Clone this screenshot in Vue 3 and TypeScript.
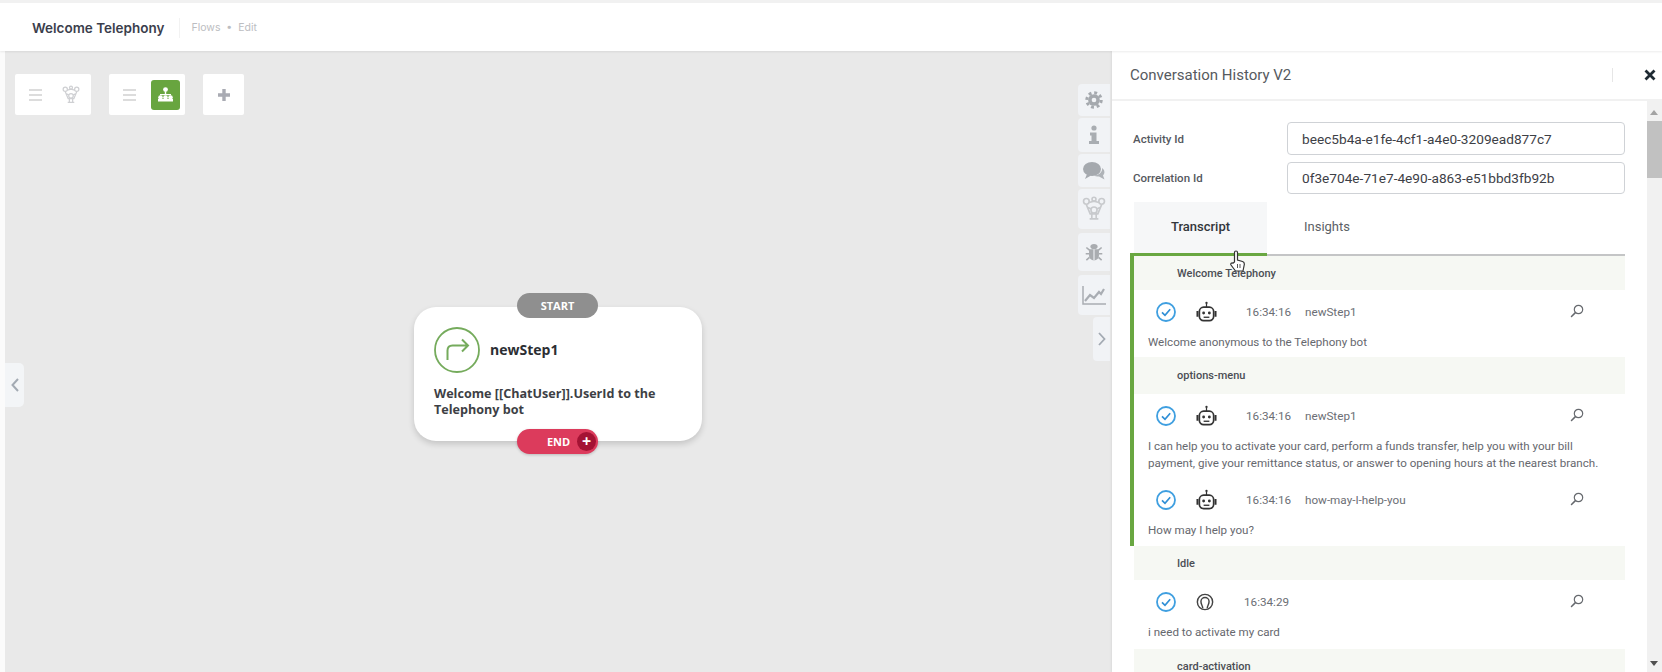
<script setup lang="ts">
type Row = { kind: 'group'; title: string; h: number } | { kind: 'msg'; who: 'bot' | 'user'; time: string; step: string; text: string[]; h: number }
const rows: Row[] = [
  { kind: 'group', title: 'Welcome Telephony', h: 34 },
  { kind: 'msg', who: 'bot', time: '16:34:16', step: 'newStep1', text: ['Welcome anonymous to the Telephony bot'], h: 67 },
  { kind: 'group', title: 'options-menu', h: 37 },
  { kind: 'msg', who: 'bot', time: '16:34:16', step: 'newStep1', text: ['I can help you to activate your card, perform a funds transfer, help you with your bill', 'payment, give your remittance status, or answer to opening hours at the nearest branch.'], h: 84 },
  { kind: 'msg', who: 'bot', time: '16:34:16', step: 'how-may-I-help-you', text: ['How may I help you?'], h: 68 },
  { kind: 'group', title: 'Idle', h: 34 },
  { kind: 'msg', who: 'user', time: '16:34:29', step: '', text: ['i need to activate my card'], h: 69 },
  { kind: 'group', title: 'card-activation', h: 34 },
]
</script>

<template>
  <div class="app">
    <svg class="defs" width="0" height="0">
      <symbol id="flow" viewBox="0 0 22 24">
        <g fill="none" stroke="currentColor" stroke-width="1.500">
          <circle cx="4" cy="5" r="2.600" /><circle cx="18" cy="5" r="2.600" /><circle cx="11" cy="3" r="1.800" /><circle cx="11" cy="13" r="2.800" />
          <path d="M6.500 6 11 4.800 15.500 6M4 8l3.500 8.500h7L18 8M5.500 10.500 8.500 12M16.500 10.500 13.500 12M7 21h8M9 17v4M13 17v4" />
        </g>
      </symbol>
      <symbol id="search" viewBox="0 0 14 14">
        <circle cx="8.500" cy="5.500" r="4.200" fill="none" stroke="currentColor" stroke-width="1.200" />
        <path d="M5.400 8.600 1.500 12.500" stroke="currentColor" stroke-width="1.500" stroke-linecap="round" />
      </symbol>
      <symbol id="check" viewBox="0 0 22 22">
        <circle cx="11" cy="11" r="9" fill="none" stroke="#3f9fe0" stroke-width="1.800" />
        <path d="M7 11.300l3 3 5.200-6" fill="none" stroke="#2f8fd6" stroke-width="1.700" />
      </symbol>
      <symbol id="bot" viewBox="0 0 22 24">
        <circle cx="11" cy="2.500" r="1.200" fill="#333" />
        <path d="M11 3v4" stroke="#333" stroke-width="1.300" />
        <rect x="3.500" y="7" width="15" height="14" rx="4.500" fill="none" stroke="#333" stroke-width="1.800" />
        <path d="M1.500 11v6M20.500 11v6" stroke="#333" stroke-width="2" />
        <circle cx="8" cy="13" r="1.500" fill="#333" /><circle cx="14" cy="13" r="1.500" fill="#333" />
        <path d="M8 17.500h6" stroke="#333" stroke-width="1.400" />
      </symbol>
      <symbol id="user" viewBox="0 0 20 20">
        <circle cx="10" cy="10" r="8.500" fill="none" stroke="#444" stroke-width="1.600" />
        <path d="M7.500 17c0-3-2-4-2-7.500a4.500 4.500 0 0 1 9 0c0 3.500-2 4.500-2 7.500" fill="none" stroke="#444" stroke-width="1.600" />
      </symbol>
    </svg>

    <header class="topbar">
      <span class="page-title">Welcome Telephony</span>
      <span class="crumbs">Flows &nbsp;•&nbsp; Edit</span>
    </header>

    <div class="body">
      <div class="gutter"></div>

      <main class="canvas">
        <div class="toolbars">
          <div class="tool wide">
            <span class="burger"><i></i><i></i><i></i></span>
            <svg class="flow-icon"><use href="#flow" /></svg>
          </div>
          <div class="tool wide">
            <span class="burger"><i></i><i></i><i></i></span>
            <span class="green-btn">
              <svg width="17" height="15" viewBox="0 0 17 15" fill="#fff">
                <circle cx="8.500" cy="2.600" r="2.400" /><rect x="7.800" y="4.500" width="1.400" height="3" />
                <path d="M3 7h11v1.200H3z" /><circle cx="3.500" cy="10.500" r="2.300" /><circle cx="8.500" cy="10.500" r="2.300" /><circle cx="13.500" cy="10.500" r="2.300" />
                <rect x="1" y="12" width="15" height="2.500" />
              </svg>
            </span>
          </div>
          <div class="tool square">
            <svg width="14" height="14" viewBox="0 0 14 14"><path d="M7 1v12M1 7h12" stroke="#a9abb3" stroke-width="3.400" /></svg>
          </div>
        </div>

        <button class="edge-tab left-tab" type="button">
          <svg width="8" height="14" viewBox="0 0 8 14"><path d="M7 1 1.500 7 7 13" fill="none" stroke="#a3aab3" stroke-width="2" /></svg>
        </button>

        <article class="node">
          <span class="pill start">START</span>
          <div class="node-head">
            <span class="node-icon">
              <svg width="46" height="46" viewBox="0 0 46 46" fill="none" stroke="#75ab5c" stroke-width="1.800">
                <circle cx="23" cy="23" r="22" />
                <path d="M13.500 33V23.500q0-5 5-5H34M28 12.500l6 6-6 6" stroke-width="2" />
              </svg>
            </span>
            <span class="node-name">newStep1</span>
          </div>
          <p class="node-text">Welcome [[ChatUser]].UserId to the Telephony bot</p>
          <span class="pill end">END<span class="end-plus">+</span></span>
        </article>

        <nav class="side-tabs">
          <span class="side t32">
            <svg width="18" height="18" viewBox="0 0 20 20">
              <circle cx="10" cy="10" r="6.500" fill="#a5a9ae" />
              <circle cx="10" cy="10" r="8" fill="none" stroke="#a5a9ae" stroke-width="3.400" stroke-dasharray="3.200 3.080" />
              <circle cx="10" cy="10" r="2.600" fill="#f1f3f6" />
            </svg>
          </span>
          <span class="side t34">
            <svg width="12" height="20" viewBox="0 0 12 20" fill="#a9adb2">
              <circle cx="6" cy="3" r="2.600" /><path d="M2 7.500h6.500V16H11v3H1v-3h2.500v-5.500H2z" />
            </svg>
          </span>
          <span class="side t33">
            <svg width="24" height="20" viewBox="0 0 24 20">
              <ellipse cx="10" cy="8" rx="9" ry="7" fill="#a5a9ae" />
              <path d="M5 13 3 18l6-3.500z" fill="#a5a9ae" />
              <path d="M20 7c2.500 1.500 3.500 5 1 7.500l1.500 4-5.500-3c-2 .3-3.500 0-5-1 4 0 9-3 8-7.500z" fill="#afb3b8" />
            </svg>
          </span>
          <span class="side t40"><svg class="side-flow"><use href="#flow" /></svg></span>
          <span class="side t38">
            <svg width="18" height="20" viewBox="0 0 20 22" fill="#a9acb0">
              <ellipse cx="10" cy="5" rx="4" ry="3" />
              <path d="M4.500 8h11v7c0 3-2.500 5.500-5.500 5.500S4.500 18 4.500 15z" />
              <path d="M10 8v12.500" stroke="#f1f3f6" stroke-width="1.200" />
              <path d="M5 9 1.500 6M15 9l3.500-3M4.500 13H.8M15.500 13h3.700M5 17l-3.500 3M15 17l3.500 3" stroke="#a9acb0" stroke-width="1.800" />
            </svg>
          </span>
          <span class="side t40">
            <svg width="24" height="22" viewBox="0 0 24 22" fill="none" stroke="#a9adb3">
              <path d="M1 2v18h23" stroke-width="1.500" />
              <path d="M3 17l5-6 4 3 5-6 2 2 3-5" stroke-width="2.200" />
            </svg>
          </span>
          <button class="side chevron" type="button">
            <svg width="8" height="14" viewBox="0 0 8 14"><path d="M1 1l5.500 6L1 13" fill="none" stroke="#a3aab3" stroke-width="1.800" /></svg>
          </button>
        </nav>
      </main>

      <aside class="panel">
        <div class="panel-head">
          <h2 class="panel-title">Conversation History V2</h2>
          <span class="head-rule"></span>
          <svg class="close" width="12" height="12" viewBox="0 0 12 12"><path d="M1.500 1.500l9 9M10.500 1.500l-9 9" stroke="#1f2a33" stroke-width="2.800" /></svg>
        </div>

        <div class="panel-main">
          <div class="panel-scroll">
            <label class="field"><span>Activity Id</span><input readonly value="beec5b4a-e1fe-4cf1-a4e0-3209ead877c7" /></label>
            <label class="field second"><span>Correlation Id</span><input readonly value="0f3e704e-71e7-4e90-a863-e51bbd3fb92b" /></label>

            <div class="tabs">
              <span class="tab active">Transcript</span>
              <span class="tab">Insights</span>
            </div>

            <div class="transcript">
              <template v-for="(r, i) in rows" :key="i">
                <div v-if="r.kind === 'group'" class="group" :style="{ height: r.h + 'px' }">{{ r.title }}</div>
                <div v-else class="msg" :style="{ height: r.h + 'px' }">
                  <div class="msg-head">
                    <svg class="ic-check"><use href="#check" /></svg>
                    <svg v-if="r.who === 'bot'" class="ic-bot"><use href="#bot" /></svg>
                    <svg v-else class="ic-user"><use href="#user" /></svg>
                    <span class="time" :class="r.who">{{ r.time }}</span>
                    <span class="step">{{ r.step }}</span>
                    <svg class="ic-search"><use href="#search" /></svg>
                  </div>
                  <p v-for="line in r.text" :key="line" class="line">{{ line }}</p>
                </div>
              </template>
              <span class="rail"></span>
              <span class="rail-top"></span>
            </div>

            <svg class="cursor" width="16" height="24" viewBox="0 0 16 24">
              <path d="M4.500 12V2.500a1.500 1.500 0 0 1 3 0V10l5 1.500c1.500.5 2 1.500 1.800 3L13 21H5.500L1 15c-.8-1.200.8-2.800 2-1.800z" fill="#fff" stroke="#333" stroke-width="1.200" />
              <path d="M7.500 14v4M10 14v4" stroke="#555" />
            </svg>
          </div>

          <div class="scrollbar">
            <span class="arrow up"></span>
            <span class="thumb"></span>
            <span class="arrow down"></span>
          </div>
        </div>
      </aside>
    </div>
  </div>
</template>

<style>
html, body { margin: 0; overflow: hidden; }
</style>

<style scoped>
* { box-sizing: border-box; }
.app { width: 1662px; height: 672px; display: flex; flex-direction: column; overflow: hidden; background: #fff; font-family: Roboto, "Liberation Sans", sans-serif; position: relative; }
.defs { position: absolute; }

.topbar { height: 51px; flex: none; display: flex; align-items: center; padding: 3px 0 0 32px; background: #fff; border-top: 3px solid #f1f1f1; box-shadow: 0 1px 2px rgba(0,0,0,.08); position: relative; z-index: 3; }
.page-title { font: 600 13.500px Inter, sans-serif; color: #3b3e4c; padding-right: 15px; border-right: 1px solid #f2f2f2; line-height: 20px; margin-top: -2px; }
.crumbs { font: 400 10.500px Inter, sans-serif; color: #bcbdc1; margin-left: 11px; margin-top: -2px; }

.body { flex: 1; display: flex; min-height: 0; }
.gutter { width: 5px; flex: none; background: #fbfbfb; }

.canvas { flex: 1; position: relative; background: #e9e9e9; }
.toolbars { display: flex; gap: 18px; padding: 23px 0 0 10px; }
.tool { height: 41px; background: #fff; display: flex; align-items: center; border-radius: 2px; }
.tool.wide { width: 76px; padding: 0 5px 0 14px; justify-content: space-between; }
.tool.square { width: 41px; justify-content: center; }
.burger { width: 13px; display: flex; flex-direction: column; gap: 3px; }
.burger i { display: block; height: 2px; background: #dcdcdc; }
.flow-icon { width: 18px; height: 20px; color: #cfd0d3; margin-right: 6px; }
.green-btn { width: 29px; height: 30px; background: #68a53f; border-radius: 3px; display: flex; align-items: center; justify-content: center; }

.edge-tab { border: 0; padding: 0; display: flex; align-items: center; justify-content: center; }
.left-tab { position: absolute; left: 0; top: 312px; width: 19px; height: 44px; background: #f3f5f7; border-radius: 0 5px 5px 0; }

.node { position: absolute; left: 409px; top: 256px; width: 288px; height: 134px; background: #fff; border-radius: 22px; box-shadow: 0 3px 6px rgba(0,0,0,.16); padding: 20px 20px 0; font-family: "Open Sans", sans-serif; color: #3d3f45; }
.node-head { display: flex; align-items: center; gap: 10px; }
.node-icon { display: flex; }
.node-name { font-size: 14px; font-weight: 700; color: #2c2e33; margin-top: -2px; }
.node-text { margin: 13px 0 0; font-size: 12.600px; font-weight: 700; line-height: 15.500px; width: 240px; }
.pill { position: absolute; left: 103px; width: 81px; height: 25px; border-radius: 13px; color: #fff; font-size: 11px; font-weight: 700; display: flex; align-items: center; justify-content: center; }
.start { top: -14px; background: #8f8f8f; }
.end { top: 122px; background: #dc3b5c; padding-left: 2px; box-shadow: 0 1px 3px rgba(0,0,0,.2); }
.end-plus { position: absolute; right: 2px; top: 3px; width: 19px; height: 19px; border-radius: 50%; background: #a41334; font-size: 16px; line-height: 18px; text-align: center; }

.side-tabs { position: absolute; right: 2px; top: 33px; width: 32px; display: flex; flex-direction: column; gap: 2px; align-items: flex-end; }
.side { width: 32px; background: #f1f3f6; border-radius: 4px 0 0 4px; display: flex; align-items: center; justify-content: center; }
.t32 { height: 32px; } .t33 { height: 33px; } .t34 { height: 34px; } .t38 { height: 38px; margin: 2px 0; } .t40 { height: 40px; }
.side-flow { width: 24px; height: 28px; color: #c8cacd; }
.chevron { width: 17px; height: 44px; border: 0; padding: 0; }

.panel { width: 550px; flex: none; background: #fff; display: flex; flex-direction: column; min-height: 0; position: relative; z-index: 2; box-shadow: -1px 0 2px rgba(0,0,0,.06); }
.panel-head { height: 50px; flex: none; display: flex; align-items: center; padding: 0 6px 0 18px; border-bottom: 2px solid #f1f1f1; }
.panel-title { margin: 0; font-size: 15px; font-weight: 400; color: #565a60; flex: 1; }
.head-rule { width: 1px; height: 14px; background: #e6e6e6; margin-right: 31px; }
.close { flex: none; }

.panel-main { flex: 1; display: flex; min-height: 0; }
.panel-scroll { flex: 1; min-width: 0; padding: 21px 22px 0 21px; position: relative; overflow: hidden; }
.field { display: flex; align-items: center; height: 33px; font-size: 11.500px; font-weight: 500; color: #55585e; }
.field.second { margin-top: 7px; height: 32px; }
.field span { width: 154px; flex: none; }
.field input { flex: 1; min-width: 0; height: 100%; border: 1px solid #cfd2d6; border-radius: 4px; padding: 0 14px; font: 400 13.660px Roboto, sans-serif; color: #3d4046; outline: none; background: #fff; }

.tabs { display: flex; height: 52px; margin-top: 8px; margin-left: 1px; }
.tab { width: 133px; display: flex; align-items: center; justify-content: center; font-size: 13px; color: #5c5f65; padding-bottom: 3px; }
.tab + .tab { width: 120px; }
.tab.active { background: #f6f7f8; color: #33363b; font-weight: 500; }

.transcript { position: relative; border-top: 2px solid #c4c5c6; margin-left: 1px; }
.rail { position: absolute; left: -4px; top: -2px; width: 4px; height: 292px; background: #69a741; }
.rail-top { position: absolute; left: -4px; top: -3px; width: 137px; height: 3px; background: #69a741; }
.group { display: flex; align-items: center; padding-left: 43px; background: #f6f8f3; font-size: 11px; font-weight: 500; color: #4b4e54; }
.msg { padding: 0 0 0 14px; }
.msg-head { height: 44px; display: flex; align-items: center; position: relative; color: #6b6e74; font-size: 11.700px; }
.ic-check { width: 22px; height: 22px; margin-left: 7px; flex: none; }
.ic-bot { width: 21px; height: 24px; margin-left: 19px; flex: none; }
.ic-user { width: 18px; height: 18px; margin-left: 19px; flex: none; }
.time { margin-left: 29px; width: 59px; }
.time.user { margin-left: 30px; }
.step { color: #6b6e74; }
.ic-search { width: 14px; height: 14px; position: absolute; left: 422px; top: 14px; color: #66696e; }
.line { margin: 0; font-size: 11.600px; line-height: 17px; color: #66686e; }

.cursor { position: absolute; left: 118px; top: 149px; }

.scrollbar { width: 15px; flex: none; background: #f1f1f1; position: relative; }
.thumb { position: absolute; left: 0; top: 20px; width: 15px; height: 57px; background: #c1c1c1; }
.arrow { position: absolute; left: 3px; width: 0; height: 0; border-left: 4px solid transparent; border-right: 4px solid transparent; }
.arrow.up { top: 9px; border-bottom: 5px solid #a3a3a3; }
.arrow.down { bottom: 6px; border-top: 5px solid #505050; }
</style>
